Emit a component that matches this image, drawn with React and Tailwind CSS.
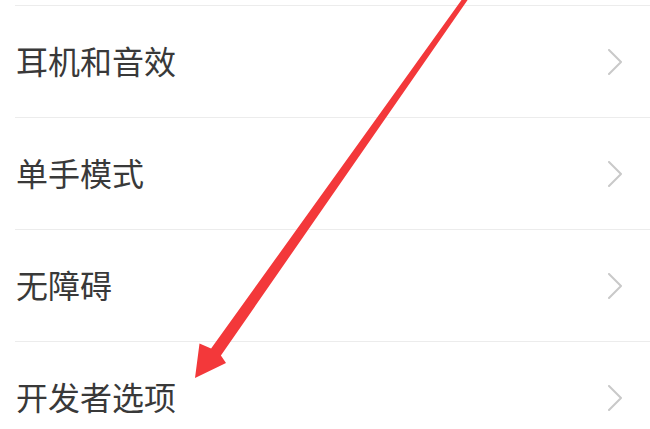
const items = ["耳机和音效", "单手模式", "无障碍", "开发者选项"]

const Chevron = () => (
    <svg width="16" height="26" viewBox="0 0 16 26" className="shrink-0">
        <polyline points="2,1 14,13 2,25" fill="none" stroke="#c9c9c9" strokeWidth="2" strokeLinejoin="round" strokeLinecap="round" />
    </svg>
)

export default function App() {
    return (
        <div className="relative w-[650px] h-[429px] overflow-hidden bg-white pt-[5px]"
            style={{ fontFamily: '"Noto Sans CJK SC", "Noto Sans", sans-serif' }}>
            {items.map((label) => (
                <div key={label} className="ml-[15px] h-[112px] border-t border-[#ececec] flex items-center justify-between pr-[27px]">
                    <span className="pl-[1px] pb-[4px] text-[32px] leading-none text-[#393939]">{label}</span>
                    <Chevron />
                </div>
            ))}

            {/* red arrow drawn over the list */}
            <svg className="absolute left-0 top-0 pointer-events-none" width="650" height="429" viewBox="0 0 650 429">
                <polygon
                    points="464,-3.45 468,-0.55 220.9,355.5 226,363 195,378 199.5,343.5 211.1,348.5"
                    fill="#f3383a"
                />
            </svg>
        </div>
    )
}
